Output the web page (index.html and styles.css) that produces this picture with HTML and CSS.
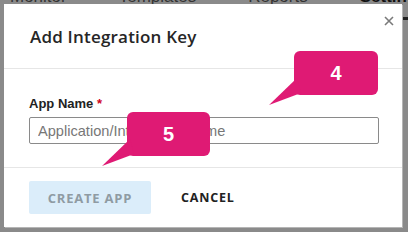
FILE: index.html
```html
<!DOCTYPE html>
<html lang="en">
  <head>
    <meta charset="UTF-8" />
    <title>Add Integration Key</title>
    <link rel="stylesheet" href="styles.css">
  </head>
  <body>
    <!-- page behind the overlay -->
    <div class="tabs">
      <span class="tab">Monitor</span>
      <span class="tab">Templates</span>
      <span class="tab">Reports</span>
      <span class="tab active">Settings</span>
    </div>

    <!-- modal -->
    <div class="modal">
      <div class="modal-header">
        <h2 class="modal-title">Add Integration Key</h2>
        <button class="close" aria-label="Close">
          <svg width="10" height="10" viewBox="0 0 10 10">
            <path d="M1 1 L9 9 M9 1 L1 9" stroke="#7a7a7a" stroke-width="1.6" />
          </svg>
        </button>
      </div>
      <div class="modal-body">
        <label class="field-label" for="appName">App Name <span class="req">*</span></label>
        <input id="appName" class="field-input" type="text" placeholder="Application/Integration Name" />
      </div>
      <div class="modal-footer">
        <button class="btn-create" disabled>CREATE APP</button>
        <button class="btn-cancel">CANCEL</button>
      </div>
    </div>

    <!-- step callouts -->
    <div class="callout step4">
      <svg class="tail" width="40" height="36" viewBox="0 0 40 36">
        <polygon points="29,6 1,33 33,21" />
      </svg>
      <span>4</span>
    </div>
    <div class="callout step5">
      <svg class="tail" width="40" height="36" viewBox="0 0 40 36">
        <polygon points="29,6 1,33 33,21" />
      </svg>
      <span>5</span>
    </div>
  </body>
</html>
```

FILE: styles.css
```css
body {
  margin: 0;
  width: 408px;
  height: 232px;
  overflow: hidden;
  background-color: #8a8a8a;
  position: relative;
  font-family: "Liberation Sans", Arial, sans-serif;
}

/* page behind */
.tabs {
  display: flex;
  margin-top: -13px;
  padding-left: 10px;
  gap: 52px;
  font-size: 17px;
  color: #333;
  border-bottom: 2px solid transparent;
}
.tab.active {
  color: #111;
  font-weight: bold;
  padding-bottom: 10px;
  border-bottom: 3px solid #222;
}

/* modal */
.modal {
  position: absolute;
  left: 4px;
  top: 4px;
  width: 398px;
  height: 223px;
  background-color: white;
  box-shadow: 1px 1px 0 #b5b5b5;
  display: flex;
  flex-direction: column;
}

.modal-header {
  height: 65px;
  border-bottom: 1px solid #e6e6e6;
  box-sizing: border-box;
  padding: 21px 0 0 26px;
  position: relative;
}
.modal-title {
  margin: 0;
  font-family: "Open Sans", sans-serif;
  font-weight: 600;
  font-size: 17px;
  color: #262626;
  letter-spacing: 0.2px;
}
.close {
  position: absolute;
  top: 10px;
  right: 8px;
  border: none;
  background: none;
  padding: 0;
  width: 10px;
  height: 10px;
  cursor: pointer;
}

.modal-body {
  display: flex;
  flex-direction: column;
  padding: 27px 23px 23px 25px;
  border-bottom: 1px solid #e6e6e6;
}
.field-label {
  font-size: 13px;
  font-weight: bold;
  color: #222;
  margin-bottom: 6px;
}
.req {
  color: #d0021b;
}
.field-input {
  height: 27px;
  box-sizing: border-box;
  border: 1px solid #8a8a8a;
  border-radius: 2px;
  padding: 0 8px;
  font-family: "Liberation Sans", Arial, sans-serif;
  font-size: 14.6px;
  color: #333;
}
.field-input::placeholder {
  color: #777;
}

.modal-footer {
  display: flex;
  align-items: center;
  padding: 13px 0 0 25px;
}
.btn-create {
  width: 122px;
  height: 33px;
  border: none;
  border-radius: 2px;
  background-color: #dbedfa;
  color: #8f9ba3;
  font-family: "Open Sans", sans-serif;
  font-weight: 700;
  font-size: 13px;
  letter-spacing: 0.8px;
}
.btn-cancel {
  margin-left: 22px;
  border: none;
  background: none;
  padding: 0 8px;
  color: #222;
  font-family: "Open Sans", sans-serif;
  font-weight: 700;
  font-size: 12.5px;
  letter-spacing: 0.8px;
  cursor: pointer;
}

/* callouts */
.callout {
  position: absolute;
  width: 84px;
  height: 44px;
  border-radius: 6px;
  background-color: #df1a74;
  color: white;
  display: flex;
  align-items: center;
  justify-content: center;
  font-size: 20px;
  font-weight: bold;
}
.callout .tail {
  position: absolute;
  left: -26px;
  top: 21px;
  fill: #df1a74;
}
.callout span {
  position: relative;
}
.step4 {
  left: 294px;
  top: 51px;
}
.step5 {
  left: 127px;
  top: 112px;
  width: 83px;
}
```
